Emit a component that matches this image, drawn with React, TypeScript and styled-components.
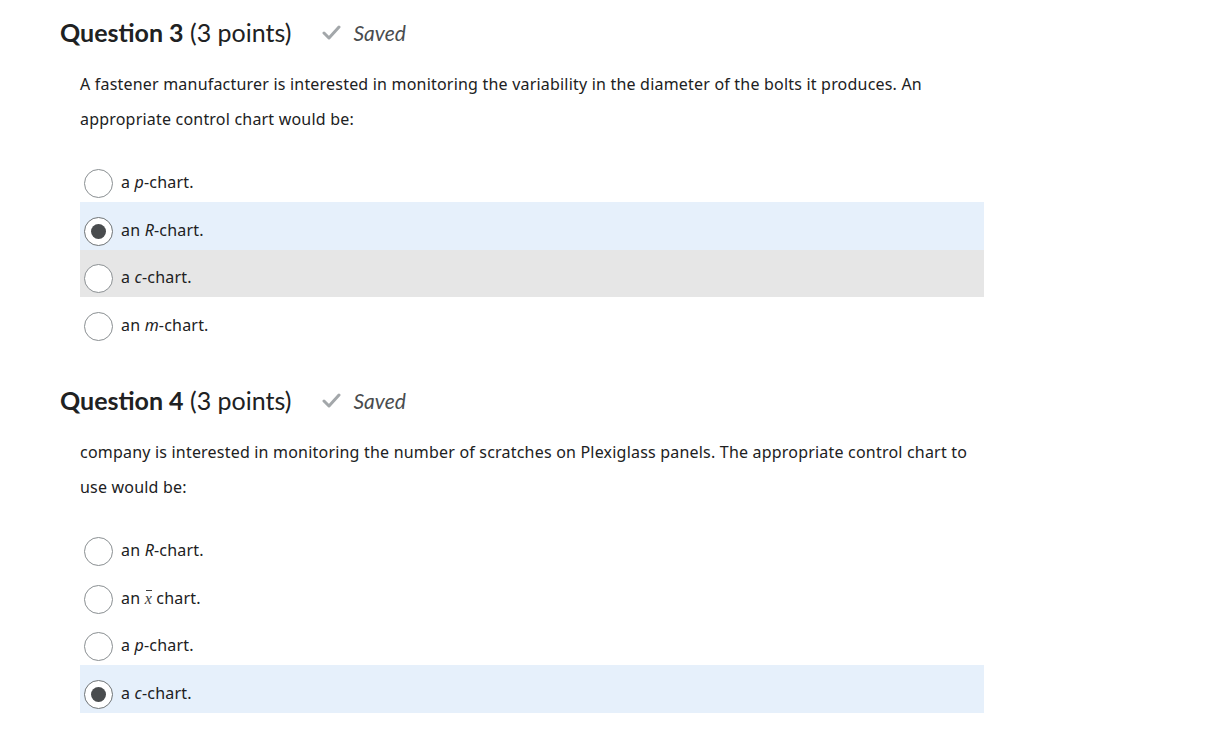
import React from "react";
import styled, { createGlobalStyle } from "styled-components";

const GlobalStyle = createGlobalStyle`
  html, body { margin: 0; padding: 0; background: #ffffff; }
  body { font-family: "Noto Sans", "Open Sans", sans-serif; color: #202122; }
`;

const Page = styled.div`
  padding: 17px 0 0 60px;
  width: 924px;
`;

const QuestionBlock = styled.section`
  margin-bottom: 40.5px;
`;

const Header = styled.div`
  display: flex;
  align-items: center;
  height: 30px;
`;

const Title = styled.h2`
  margin: 0;
  font-family: "Lato", sans-serif;
  font-size: 25px;
  line-height: 30px;
  font-weight: 400;
  color: #202122;
`;

const TitleStrong = styled.strong`
  font-weight: 700;
`;

const Saved = styled.span`
  display: inline-flex;
  align-items: center;
  gap: 12px;
  margin-left: 31px;
  font-family: "Lato", sans-serif;
  font-style: italic;
  font-size: 21px;
  color: #494c4e;
`;

const Body = styled.div`
  padding-left: 20px;
`;

const Prompt = styled.p`
  margin: 19.5px 0 18px;
  font-size: 16px;
  letter-spacing: 0.2px;
  line-height: 35px;
  color: #202122;
`;

const OptionList = styled.div`
  display: flex;
  flex-direction: column;
`;

const Row = styled.label<{ $tone: "none" | "selected" | "hover" }>`
  display: flex;
  align-items: flex-start;
  box-sizing: border-box;
  height: 47.5px;
  padding: 14.5px 0 0 4px;
  background: ${(p) =>
    p.$tone === "selected" ? "#e6f0fb" : p.$tone === "hover" ? "#e6e6e6" : "transparent"};
`;

const Radio = styled.span<{ $checked: boolean }>`
  box-sizing: border-box;
  width: 29px;
  height: 29px;
  border-radius: 50%;
  border: 1px solid ${(p) => (p.$checked ? "#6e7376" : "#8a8f92")};
  background: #ffffff;
  display: flex;
  align-items: center;
  justify-content: center;
  flex: none;
  &::after {
    content: "";
    display: ${(p) => (p.$checked ? "block" : "none")};
    width: 15px;
    height: 15px;
    border-radius: 50%;
    background: #494c4e;
  }
`;

const OptionText = styled.span`
  margin-left: 8px;
  font-size: 16px;
  letter-spacing: 0.2px;
  line-height: 26px;
  color: #202122;
`;

const MathVar = styled.em`
  font-style: italic;
`;

const XBar = styled.span`
  position: relative;
  display: inline-block;
  font-family: "Liberation Serif", serif;
  font-style: italic;
  font-size: 16px;
  color: #404040;
  &::before {
    content: "";
    position: absolute;
    left: 1px;
    right: 0;
    top: 4px;
    height: 1.5px;
    background: #404040;
  }
`;

const Check = () => (
  <svg width="19" height="15" viewBox="0 0 19 15" aria-hidden="true">
    <path d="M2 8 L7 13 L17 2" fill="none" stroke="#a3a7aa" strokeWidth="3" strokeLinecap="round" strokeLinejoin="round" />
  </svg>
);

type Opt = { content: React.ReactNode; tone: "none" | "selected" | "hover"; checked: boolean };

const Question = ({ num, prompt, options }: { num: number; prompt: React.ReactNode; options: Opt[] }) => (
  <QuestionBlock>
    <Header>
      <Title>
        <TitleStrong>Question {num}</TitleStrong> (3 points)
      </Title>
      <Saved>
        <Check />
        Saved
      </Saved>
    </Header>
    <Body>
      <Prompt>{prompt}</Prompt>
      <OptionList>
        {options.map((o, i) => (
          <Row key={i} $tone={o.tone}>
            <Radio $checked={o.checked} />
            <OptionText>{o.content}</OptionText>
          </Row>
        ))}
      </OptionList>
    </Body>
  </QuestionBlock>
);

export default function App() {
  return (
    <>
      <GlobalStyle />
      <Page>
        <Question
          num={3}
          prompt={
            <>
              A fastener manufacturer is interested in monitoring the variability in the diameter of the bolts it produces. An
              appropriate control chart would be:
            </>
          }
          options={[
            { content: <>a <MathVar>p</MathVar>-chart.</>, tone: "none", checked: false },
            { content: <>an <MathVar>R</MathVar>-chart.</>, tone: "selected", checked: true },
            { content: <>a <MathVar>c</MathVar>-chart.</>, tone: "hover", checked: false },
            { content: <>an <MathVar>m</MathVar>-chart.</>, tone: "none", checked: false },
          ]}
        />
        <Question
          num={4}
          prompt={
            <>
              company is interested in monitoring the number of scratches on Plexiglass panels. The appropriate control chart to
              use would be:
            </>
          }
          options={[
            { content: <>an <MathVar>R</MathVar>-chart.</>, tone: "none", checked: false },
            { content: <>an <XBar>x</XBar> chart.</>, tone: "none", checked: false },
            { content: <>a <MathVar>p</MathVar>-chart.</>, tone: "none", checked: false },
            { content: <>a <MathVar>c</MathVar>-chart.</>, tone: "selected", checked: true },
          ]}
        />
      </Page>
    </>
  );
}
